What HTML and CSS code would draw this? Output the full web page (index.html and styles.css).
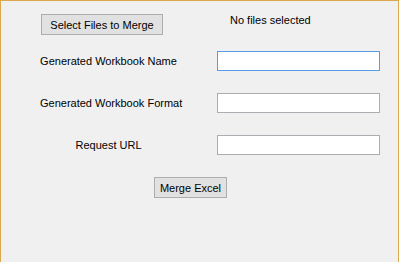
FILE: index.html
```html
<!DOCTYPE html>
<html lang="en">
<head>
    <meta charset="UTF-8">
    <title>Merge Excel</title>
    <link rel="stylesheet" href="styles.css">
</head>
<body>
    <div class="window">
        <div class="top-row">
            <button class="win-btn btn-select">Select Files to Merge</button>
            <span class="status">No files selected</span>
        </div>
        <div class="fields">
            <label class="field-label">Generated Workbook Name</label>
            <input class="text-box focused" type="text">
            <label class="field-label">Generated Workbook Format</label>
            <input class="text-box" type="text">
            <label class="field-label">Request URL</label>
            <input class="text-box" type="text">
        </div>
        <div class="bottom-row">
            <button class="win-btn btn-merge">Merge Excel</button>
        </div>
    </div>
</body>
</html>
```

FILE: styles.css
```css
html, body {
    margin: 0;
    background: #f0f0f0;
}
.window {
    height: 262px;
    box-sizing: border-box;
    border: 1px solid #daa94c;
    border-bottom: none;
    background: #f0f0f0;
    font-family: 'Liberation Sans', Arial, sans-serif;
    font-size: 11px;
    color: #000;
}
.top-row {
    display: flex;
    align-items: center;
    padding: 13px 0 0 40px;
    height: 21px;
}
.win-btn {
    box-sizing: border-box;
    height: 21px;
    background: #e1e1e1;
    border: 1px solid #adadad;
    border-radius: 0;
    padding: 0;
    font-family: inherit;
    font-size: 11px;
    color: #000;
}
.btn-select {
    width: 122px;
}
.status {
    margin-left: 67px;
    margin-top: -10px;
}
.fields {
    display: grid;
    grid-template-columns: 137px 163px;
    grid-template-rows: 20px 20px 20px;
    column-gap: 40px;
    row-gap: 22px;
    align-items: center;
    padding: 16px 0 0 39px;
}
.field-label {
    text-align: center;
    white-space: nowrap;
}
.text-box {
    box-sizing: border-box;
    width: 163px;
    height: 20px;
    margin: 0;
    border: 1px solid #abadb3;
    background: #fff;
    outline: none;
}
.text-box.focused {
    border-color: #569de5;
}
.bottom-row {
    padding: 22px 0 0 153px;
}
.btn-merge {
    width: 73px;
}
```
